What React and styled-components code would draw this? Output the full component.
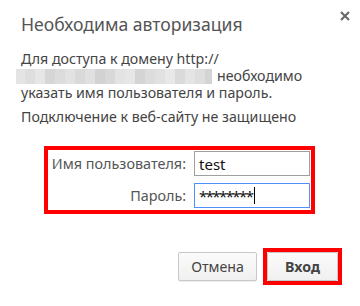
import React from 'react'
import styled, { createGlobalStyle } from 'styled-components'

const GlobalStyle = createGlobalStyle`
  html, body {
    margin: 0;
    padding: 0;
    background: #ffffff;
  }
  body {
    font-family: "Noto Sans", "DejaVu Sans", sans-serif;
  }
`;

const Dialog = styled.div`
  position: relative;
  width: 360px;
  height: 302px;
  background: #ffffff;
  box-shadow: 0 1px 0 #b9b9b9, 0 2px 3px rgba(0, 0, 0, 0.25);
  box-sizing: border-box;
  padding: 12px 0 0 21px;
`;

const Title = styled.h1`
  margin: 0;
  font-size: 17.6px;
  font-weight: 400;
  line-height: 24px;
  color: #555555;
`;

const Close = styled.button`
  position: absolute;
  top: 9px;
  right: 10px;
  width: 10px;
  height: 10px;
  padding: 0;
  border: none;
  background: none;
`;

const Message = styled.p`
  margin: ${props => props.first ? '14px' : '7px'} 0 0 0;
  font-size: 14.2px;
  line-height: 17px;
  color: #444444;
`;

const Blur = styled.span`
  display: inline-flex;
  vertical-align: -3px;
  margin-left: -5px;
  margin-right: 5px;
  height: 15px;
`;

const Cell = styled.span`
  display: block;
  width: ${props => props.w}px;
  height: 100%;
  background: ${props => props.c};
`;

const FormBox = styled.div`
  margin: 21px 0 0 23px;
  width: 271px;
  box-sizing: border-box;
  border: 4px solid #ff0000;
  padding: 1px 1px 2px 3px;
  display: grid;
  grid-template-columns: 1fr 116px;
  column-gap: 8px;
  row-gap: 7px;
  align-items: center;
`;

const Label = styled.label`
  text-align: right;
  font-size: 14.4px;
  color: #555555;
  white-space: nowrap;
`;

const Field = styled.div`
  height: 25px;
  box-sizing: border-box;
  border: 1px solid ${props => props.focused ? '#4d90fe' : '#a0a0a0'};
  padding: 0 4px;
  display: flex;
  align-items: center;
  font-size: 15px;
  color: #111111;
`;

const Secret = styled.span`
  letter-spacing: -1.6px;
`;

const Caret = styled.span`
  display: inline-block;
  width: 1px;
  height: 17px;
  background: #000000;
  margin-left: 2px;
`;

const Buttons = styled.div`
  display: flex;
  justify-content: flex-end;
  align-items: center;
  gap: 6px;
  margin: 34px 18px 0 0;
`;

const Highlight = styled.div`
  border: 4px solid #ff0000;
  display: flex;
`;

const Button = styled.button`
  width: ${props => props.w}px;
  height: 29px;
  box-sizing: border-box;
  border: 1px solid #c8c8c8;
  border-radius: 2px;
  background: linear-gradient(#fbfbfb, #f0f0f0);
  box-shadow: 0 1px 1px rgba(0, 0, 0, 0.08);
  font-family: "Noto Sans", "DejaVu Sans", sans-serif;
  font-size: 14.2px;
  font-weight: ${props => props.primary ? 700 : 400};
  color: #444444;
  padding: 0;
`;

const blurCells = [
  [9, '#e4e4e4'], [10, '#dedede'], [10, '#e6e6e6'], [10, '#d6d6d6'], [10, '#dcdcdc'],
  [10, '#e2e2e2'], [10, '#d9d9d9'], [10, '#e0e0e0'], [10, '#d2d2d2'], [10, '#d8d8d8'],
  [10, '#e3e3e3'], [10, '#e6e6e6'], [10, '#d4d4d4'], [10, '#dcdcdc'], [10, '#e1e1e1'],
  [10, '#e8e8e8'], [10, '#dadada'], [10, '#e4e4e4'], [10, '#dedede'], [7, '#d4d4d4'],
];

export default function App() {
  return (
    <>
      <GlobalStyle />
      <Dialog>
        <Close aria-label="Закрыть">
          <svg width="10" height="10" viewBox="0 0 10 10">
            <path d="M1 1 L9 9 M9 1 L1 9" stroke="#6b6b6b" strokeWidth="2.2" />
          </svg>
        </Close>
        <Title>Необходима авторизация</Title>
        <Message first>
          Для доступа к домену http://
          <br />
          <Blur>
            {blurCells.map(([w, c], i) => <Cell key={i} w={w} c={c} />)}
          </Blur>
          необходимо
          <br />
          указать имя пользователя и пароль.
        </Message>
        <Message>Подключение к веб-сайту не защищено</Message>
        <FormBox>
          <Label>Имя пользователя:</Label>
          <Field>test</Field>
          <Label>Пароль:</Label>
          <Field focused><Secret>********</Secret><Caret /></Field>
        </FormBox>
        <Buttons>
          <Button w={79}>Отмена</Button>
          <Highlight>
            <Button w={71} primary>Вход</Button>
          </Highlight>
        </Buttons>
      </Dialog>
    </>
  )
}
